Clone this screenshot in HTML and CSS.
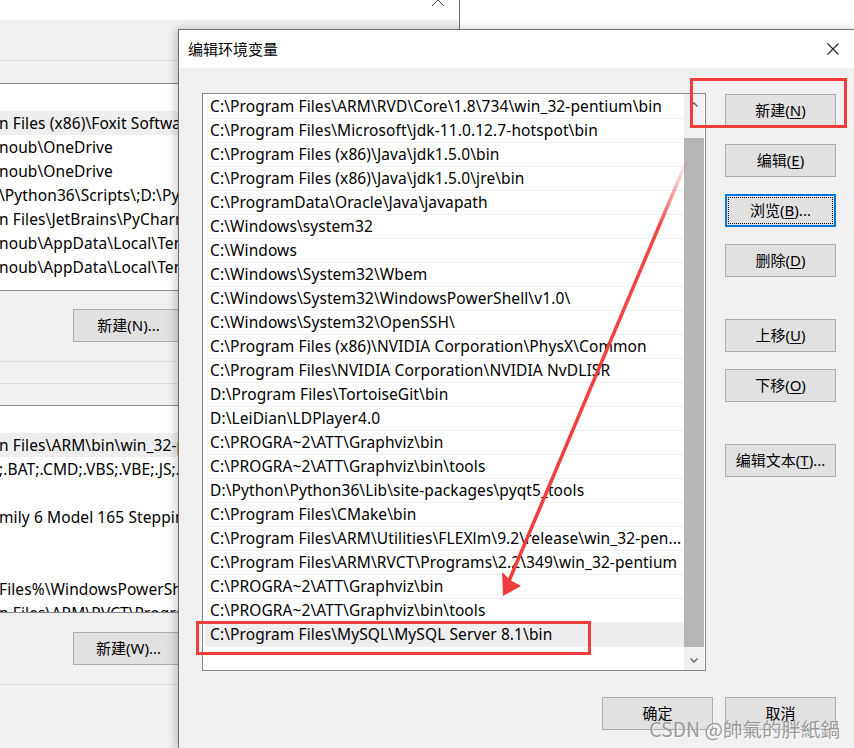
FILE: index.html
```html
<!DOCTYPE html>
<html>
  <head>
    <title>编辑环境变量</title>
    <link rel="stylesheet" href="styles.css">
  </head>
  <body>
    <div class="desktop">
      <div class="back-window">
        <div class="back-top">
          <svg class="back-close" viewBox="0 0 12 12">
            <path d="M0 0L12 12M12 0L0 12" />
          </svg>
        </div>
        <div class="back-band"></div>

        <div class="back-list first">
          <div class="back-head"></div>
          <div class="back-row active">n Files (x86)\Foxit Software\Foxit PDF Reader</div>
          <div class="back-row">noub\OneDrive</div>
          <div class="back-row">noub\OneDrive</div>
          <div class="back-row">\Python36\Scripts\;D:\Python\Python36\</div>
          <div class="back-row">n Files\JetBrains\PyCharm Community Edition</div>
          <div class="back-row">noub\AppData\Local\Temp</div>
          <div class="back-row">noub\AppData\Local\Temp</div>
        </div>
        <div class="back-actions first">
          <button class="win-button">新建(N)...</button>
        </div>
        <div class="back-line"></div>
        <div class="back-line second"></div>

        <div class="back-list second">
          <div class="back-head"></div>
          <div class="back-row active">n Files\ARM\bin\win_32-pentium</div>
          <div class="back-row">;.BAT;.CMD;.VBS;.VBE;.JS;.JSE;.WSF;.WSH;.MSC</div>
          <div class="back-row"></div>
          <div class="back-row">mily 6 Model 165 Stepping 5, GenuineIntel</div>
          <div class="back-row"></div>
          <div class="back-row"></div>
          <div class="back-row">Files%\WindowsPowerShell\Modules</div>
          <div class="back-row">n Files\ARM\RVCT\Programs</div>
        </div>
        <div class="back-actions">
          <button class="win-button">新建(W)...</button>
        </div>
        <div class="back-line"></div>
      </div>

      <div class="dialog">
        <div class="dialog-title">
          <span>编辑环境变量</span>
          <svg class="dialog-close" viewBox="0 0 12 12">
            <path d="M0.5 0.5L11.5 11.5M11.5 0.5L0.5 11.5" />
          </svg>
        </div>

        <div class="dialog-body">
          <div class="dialog-main">
            <div class="path-list">
              <div class="path-rows">
                <div class="path-row">C:\Program Files\ARM\RVD\Core\1.8\734\win_32-pentium\bin</div>
                <div class="path-row">C:\Program Files\Microsoft\jdk-11.0.12.7-hotspot\bin</div>
                <div class="path-row">C:\Program Files (x86)\Java\jdk1.5.0\bin</div>
                <div class="path-row">C:\Program Files (x86)\Java\jdk1.5.0\jre\bin</div>
                <div class="path-row">C:\ProgramData\Oracle\Java\javapath</div>
                <div class="path-row">C:\Windows\system32</div>
                <div class="path-row">C:\Windows</div>
                <div class="path-row">C:\Windows\System32\Wbem</div>
                <div class="path-row">C:\Windows\System32\WindowsPowerShell\v1.0\</div>
                <div class="path-row">C:\Windows\System32\OpenSSH\</div>
                <div class="path-row">C:\Program Files (x86)\NVIDIA Corporation\PhysX\Common</div>
                <div class="path-row">C:\Program Files\NVIDIA Corporation\NVIDIA NvDLISR</div>
                <div class="path-row">D:\Program Files\TortoiseGit\bin</div>
                <div class="path-row">D:\LeiDian\LDPlayer4.0</div>
                <div class="path-row">C:\PROGRA~2\ATT\Graphviz\bin</div>
                <div class="path-row">C:\PROGRA~2\ATT\Graphviz\bin\tools</div>
                <div class="path-row">D:\Python\Python36\Lib\site-packages\pyqt5_tools</div>
                <div class="path-row">C:\Program Files\CMake\bin</div>
                <div class="path-row">C:\Program Files\ARM\Utilities\FLEXlm\9.2\release\win_32-pen...</div>
                <div class="path-row">C:\Program Files\ARM\RVCT\Programs\2.2\349\win_32-pentium</div>
                <div class="path-row">C:\PROGRA~2\ATT\Graphviz\bin</div>
                <div class="path-row">C:\PROGRA~2\ATT\Graphviz\bin\tools</div>
                <div class="path-row selected">C:\Program Files\MySQL\MySQL Server 8.1\bin</div>
              </div>
              <div class="scrollbar">
                <div class="scroll-arrow">
                  <svg viewBox="0 0 8 5"><path d="M0.5 4.5L4 1L7.5 4.5" /></svg>
                </div>
                <div class="scroll-thumb"></div>
                <div class="scroll-arrow bottom">
                  <svg viewBox="0 0 8 5"><path d="M0.5 0.5L4 4L7.5 0.5" /></svg>
                </div>
              </div>
            </div>

            <div class="side-buttons">
              <button class="win-button">新建(<u>N</u>)</button>
              <button class="win-button">编辑(<u>E</u>)</button>
              <button class="win-button focused">浏览(<u>B</u>)...</button>
              <button class="win-button">删除(<u>D</u>)</button>
              <button class="win-button spaced">上移(<u>U</u>)</button>
              <button class="win-button">下移(<u>O</u>)</button>
              <button class="win-button spaced">编辑文本(<u>T</u>)...</button>
            </div>
          </div>

          <div class="dialog-footer">
            <button class="win-button">确定</button>
            <button class="win-button">取消</button>
          </div>
        </div>
      </div>

      <svg class="annotations" viewBox="0 0 854 748">
        <defs>
          <linearGradient id="arrow-fade" gradientUnits="userSpaceOnUse" x1="687" y1="160" x2="510" y2="580">
            <stop offset="0" stop-color="#f03c3c" stop-opacity="0" />
            <stop offset="0.16" stop-color="#f03c3c" stop-opacity="0.95" />
            <stop offset="1" stop-color="#f03c3c" />
          </linearGradient>
        </defs>
        <rect x="691.5" y="79.5" width="154" height="47" class="mark" />
        <rect x="197.5" y="622.5" width="392" height="31" class="mark" />
        <line x1="687" y1="160" x2="509" y2="581" stroke="url(#arrow-fade)" stroke-width="3.5" />
        <polygon points="503,596 502,572 510,580 521,586" fill="#f03c3c" />
      </svg>

      <div class="watermark">CSDN @帥氣的胖紙鍋</div>
    </div>
  </body>
</html>
```

FILE: styles.css
```css
body {
  margin: 0;
  width: 854px;
  height: 748px;
  overflow: hidden;
  background-color: #ffffff;
  color: #000000;
  font-family: "Noto Sans", "Noto Sans CJK SC", sans-serif;
  font-size: 15.5px;
  letter-spacing: 0.1px;
}
.desktop {
  position: relative;
  width: 854px;
  height: 748px;
  overflow: hidden;
}

/* window behind the dialog */
.back-window {
  position: absolute;
  left: 0;
  top: 0;
  width: 459px;
  height: 748px;
  border-right: 1px solid #6f6f6f;
  background-color: #f0f0f0;
}
.back-top {
  position: relative;
  height: 20px;
  background-color: #ffffff;
}
.back-close {
  position: absolute;
  left: 432px;
  top: -6px;
  width: 12px;
  height: 12px;
  stroke: #444444;
  stroke-width: 1;
  fill: none;
}
.back-band {
  height: 40px;
  border-bottom: 1px solid #dadada;
  margin-bottom: 22px;
}
.back-list {
  height: 208px;
  box-sizing: border-box;
  border-top: 1px solid #828790;
  border-bottom: 1px solid #828790;
  background-color: #ffffff;
  overflow: hidden;
}
.back-list.second {
  margin-top: 21px;
}
.back-head {
  height: 27px;
}
.back-row {
  height: 24px;
  line-height: 24px;
  padding-right: 280px;
  white-space: nowrap;
  overflow: hidden;
  text-indent: -1px;
}
.back-row.active {
  background-color: #eeeeee;
}
.back-actions {
  padding-left: 73px;
  margin-top: 19px;
  display: flex;
}
.back-actions.first {
  margin-top: 18px;
}
.back-line {
  height: 1px;
  margin-top: 19px;
  background-color: #dadada;
}
.back-line.second {
  margin-top: 21px;
}

/* buttons */
.win-button {
  width: 111px;
  height: 33px;
  box-sizing: border-box;
  padding: 0;
  border: 1px solid #adadad;
  background-color: #e1e1e1;
  color: #000000;
  font-family: "Noto Sans", "Noto Sans CJK SC", sans-serif;
  font-size: 15px;
  line-height: 1;
}
.win-button u {
  text-underline-offset: 2px;
}
.win-button.focused {
  border: 2px solid #0078d7;
  outline: 1px dotted #000000;
  outline-offset: -4px;
}

/* dialog */
.dialog {
  position: absolute;
  left: 178px;
  top: 29px;
  width: 675px;
  height: 719px;
  border-left: 1px solid #6f6f6f;
  border-top: 1px solid #6f6f6f;
  background-color: #f0f0f0;
  box-shadow: -2px 0 9px rgba(0, 0, 0, 0.22);
}
.dialog-title {
  height: 37px;
  display: flex;
  align-items: center;
  justify-content: space-between;
  padding: 0 15px 1px 9px;
  background-color: #ffffff;
  font-size: 15px;
  letter-spacing: 0;
}
.dialog-close {
  width: 12px;
  height: 12px;
  stroke: #222222;
  stroke-width: 1.1;
  fill: none;
}
.dialog-body {
  padding: 25px 18px 0 23px;
}
.dialog-main {
  display: flex;
  gap: 19px;
}
.path-list {
  width: 504px;
  height: 578px;
  box-sizing: border-box;
  border: 1px solid #828790;
  background-color: #ffffff;
  display: flex;
}
.path-rows {
  flex: 1;
  padding: 1px 0 0 2px;
  overflow: hidden;
}
.path-row {
  height: 24px;
  box-sizing: border-box;
  border-bottom: 1px solid #f0f0f0;
  padding-left: 5px;
  line-height: 23px;
  white-space: nowrap;
  overflow: hidden;
}
.path-row.selected {
  background-color: #eeeeee;
}
.scrollbar {
  width: 20px;
  margin-right: 1px;
  background-color: #f0f0f0;
  display: flex;
  flex-direction: column;
}
.scroll-arrow {
  height: 20px;
  display: flex;
  align-items: center;
  justify-content: center;
}
.scroll-arrow.bottom {
  margin-top: auto;
}
.scroll-arrow svg {
  width: 8px;
  height: 5px;
  stroke: #606060;
  stroke-width: 1.3;
  fill: none;
}
.scroll-thumb {
  height: 509px;
  margin-top: 24px;
  background-color: #b5b5b5;
}
.side-buttons {
  display: flex;
  flex-direction: column;
  gap: 17px;
  padding-top: 1px;
}
.side-buttons .spaced {
  margin-top: 25px;
}
.dialog-footer {
  display: flex;
  justify-content: flex-end;
  gap: 12px;
  margin-top: 26px;
}

/* red marks drawn over the screenshot */
.annotations {
  position: absolute;
  left: 0;
  top: 0;
  width: 854px;
  height: 748px;
  pointer-events: none;
}
.mark {
  fill: none;
  stroke: #f03c3c;
  stroke-width: 3;
}
.watermark {
  position: absolute;
  right: 14px;
  top: 714px;
  font-family: "Noto Sans CJK TC", "Noto Sans CJK SC", sans-serif;
  font-size: 19.5px;
  letter-spacing: 0;
  color: #9b9b9b;
  text-shadow: 1px 1px 0 rgba(255, 255, 255, 0.8);
  white-space: nowrap;
}
```
